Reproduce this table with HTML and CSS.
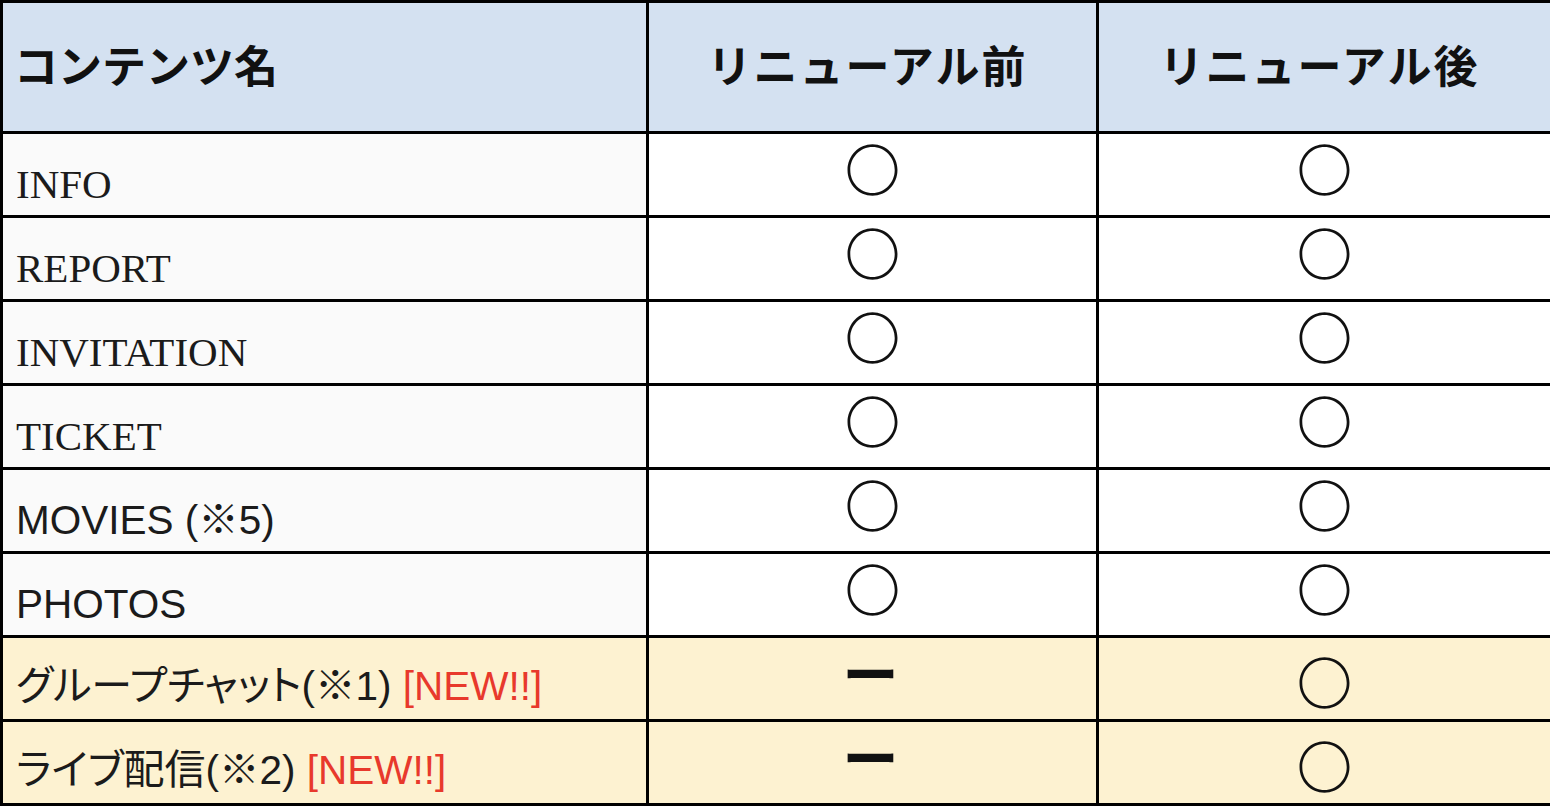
FILE: index.html
```html
<!DOCTYPE html>
<html lang="ja">
<head>
<meta charset="utf-8">
<title>コンテンツ比較</title>
<link rel="stylesheet" href="styles.css">
</head>
<body>
<table class="cmp">
  <colgroup>
    <col class="c1">
    <col class="c2">
    <col class="c3">
  </colgroup>
  <thead>
    <tr class="head">
      <th class="name">コンテンツ名</th>
      <th class="col">リニューアル前</th>
      <th class="col">リニューアル後</th>
    </tr>
  </thead>
  <tbody>
    <tr><td class="name serif">INFO</td><td class="mark"><span class="o">〇</span></td><td class="mark"><span class="o">〇</span></td></tr>
    <tr><td class="name serif">REPORT</td><td class="mark"><span class="o">〇</span></td><td class="mark"><span class="o">〇</span></td></tr>
    <tr><td class="name serif">INVITATION</td><td class="mark"><span class="o">〇</span></td><td class="mark"><span class="o">〇</span></td></tr>
    <tr><td class="name serif">TICKET</td><td class="mark"><span class="o">〇</span></td><td class="mark"><span class="o">〇</span></td></tr>
    <tr><td class="name sans">MOVIES (※5)</td><td class="mark"><span class="o">〇</span></td><td class="mark"><span class="o">〇</span></td></tr>
    <tr><td class="name sans">PHOTOS</td><td class="mark"><span class="o">〇</span></td><td class="mark"><span class="o">〇</span></td></tr>
    <tr class="new"><td class="name sans"><span class="jp">グループチャット</span>(※1) <span class="red">[NEW!!]</span></td><td class="mark dash"><span class="o">ー</span></td><td class="mark"><span class="o">〇</span></td></tr>
    <tr class="new"><td class="name sans"><span class="jp">ライブ配信</span>(※2) <span class="red">[NEW!!]</span></td><td class="mark dash"><span class="o">ー</span></td><td class="mark"><span class="o">〇</span></td></tr>
  </tbody>
</table>
</body>
</html>
```

FILE: styles.css
```css
html, body {
  margin: 0;
  padding: 0;
  background: #ffffff;
}

.cmp {
  width: 1550px;
  border-collapse: collapse;
  table-layout: fixed;
  color: #1b1b1b;
}

.c1 { width: 646px; }
.c2 { width: 450px; }
.c3 { width: 454px; }

.cmp th,
.cmp td {
  box-sizing: border-box;
  border: 3px solid #000;
  padding: 0;
}

.head th {
  height: 131px;
  background: #d4e1f1;
  font-family: "Noto Sans CJK JP", sans-serif;
  font-weight: 700;
  font-size: 44px;
  color: #111;
  vertical-align: middle;
  line-height: 1;
  padding-bottom: 6px;
}

.head th.name {
  text-align: left;
  padding-left: 11px;
}

.head th.col {
  text-align: center;
  letter-spacing: 2px;
  padding-right: 10px;
}

tbody td {
  height: 84px;
}

tbody td.name {
  background: #fafafa;
  text-align: left;
  vertical-align: bottom;
  padding-left: 13px;
  padding-bottom: 8px;
  line-height: 46px;
  white-space: nowrap;
}

.serif {
  font-family: "Liberation Serif", serif;
  font-size: 41px;
}

.sans {
  font-family: "Liberation Sans", "Noto Sans CJK JP", sans-serif;
  font-size: 40.5px;
}

.jp {
  font-family: "Noto Sans CJK JP", sans-serif;
  font-feature-settings: "palt";
  font-size: 41px;
}

.red { color: #e8392c; }

tbody td.mark {
  background: #ffffff;
  text-align: center;
  vertical-align: middle;
  font-family: "Noto Sans CJK JP", sans-serif;
  font-weight: 300;
  font-size: 56px;
  line-height: 56px;
  color: #111;
  padding-bottom: 16px;
}

.o {
  display: inline-block;
  height: 56px;
  line-height: 56px;
}

.new td,
.new td.name,
.new td.mark {
  background: #fdf2d1;
}

.new td.name {
  padding-bottom: 10px;
}

.new td.mark {
  padding-bottom: 0;
  padding-top: 3px;
}

.new td.dash {
  font-weight: 700;
  padding-top: 0;
  padding-bottom: 16px;
  padding-right: 4px;
}
```
